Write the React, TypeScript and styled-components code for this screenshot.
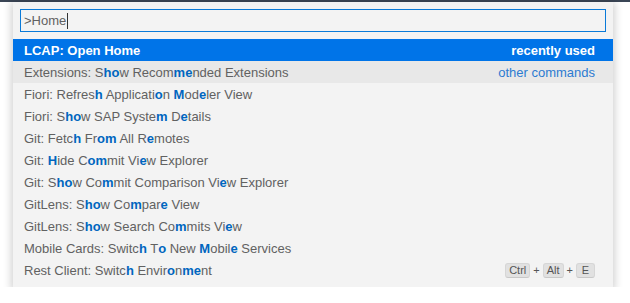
import {FC} from "react";
import styled, {createGlobalStyle} from "styled-components";

const GlobalStyle = createGlobalStyle`
  html, body {
    margin: 0;
    padding: 0;
    background: #ffffff;
  }

  body {
    font-family: "Liberation Sans", Arial, sans-serif;
    font-size: 13px;
  }
`

// [x] in a label marks a highlighted match
interface ICommand {
    label: string;
    detail?: string;
    keys?: string[];
}

const commands: ICommand[] = [
    {label: "Extensions: S[h][o]w Recom[m][e]nded Extensions", detail: "other commands"},
    {label: "Fiori: Refres[h] Applicati[o]n [M]od[e]ler View"},
    {label: "Fiori: S[h][o]w SAP Syste[m] D[e]tails"},
    {label: "Git: Fetc[h] Fr[o][m] All R[e]motes"},
    {label: "Git: [H]ide C[o][m]mit Vi[e]w Explorer"},
    {label: "Git: S[h][o]w Co[m]mit Comparison Vi[e]w Explorer"},
    {label: "GitLens: S[h][o]w Co[m]par[e] View"},
    {label: "GitLens: S[h][o]w Search Co[m]mits Vi[e]w"},
    {label: "Mobile Cards: Switc[h] T[o] New [M]obil[e] Services"},
    {label: "Rest Client: Switc[h] Envir[o]n[m][e]nt", keys: ["Ctrl", "Alt", "E"]},
]

const renderLabel = (label: string) => {
    const parts = label.split(/(\[.\])/).filter(Boolean)
    return parts.map((p, i) => p.startsWith("[")
        ? <Match key={i}>{p[1]}</Match>
        : <span key={i}>{p}</span>)
}

const Row: FC<{ cmd: ICommand; hover?: boolean }> = ({cmd, hover}) => (
    <Item hover={hover}>
        <Label>{renderLabel(cmd.label)}</Label>
        {cmd.detail && <Detail>{cmd.detail}</Detail>}
        {cmd.keys && (
            <Keys>
                {cmd.keys.map((k, i) => (
                    <span key={k}>
                        {i > 0 && <Plus>+</Plus>}
                        <Key>{k}</Key>
                    </span>
                ))}
            </Keys>
        )}
    </Item>
)

export default function App() {
    return (
        <>
            <GlobalStyle/>
            <TitleEdge/>
            <Palette>
                <InputWrap>
                    <Input>&gt;Home<Caret/></Input>
                </InputWrap>
                <List>
                    <Selected>
                        <span>LCAP: Open Home</span>
                        <span>recently used</span>
                    </Selected>
                    {commands.map((c, i) => <Row key={c.label} cmd={c} hover={i === 0}/>)}
                </List>
            </Palette>
        </>
    )
}

const TitleEdge = styled.div`
  height: 2px;
  background: #3b4656;
`

const Palette = styled.div`
  width: 600px;
  margin-left: 13px;
  background: #f3f3f3;
  box-shadow: 0 2px 8px 2px rgba(0, 0, 0, 0.18);
  padding-bottom: 6px;
`

const InputWrap = styled.div`
  padding: 7px;
`

const Input = styled.div`
  height: 21px;
  border: 1px solid #0a7ad8;
  background: #f3f3f3;
  color: #616161;
  font-size: 13px;
  line-height: 21px;
  padding-left: 3px;
  display: flex;
  align-items: center;
`

const Caret = styled.span`
  display: inline-block;
  width: 1px;
  height: 16px;
  background: #333333;
  margin-left: 1px;
`

const List = styled.div`
  display: flex;
  flex-direction: column;
`

const Item = styled.div<{ hover?: boolean }>`
  height: 22px;
  display: flex;
  align-items: center;
  justify-content: space-between;
  padding: 0 18px 0 11px;
  background: ${({hover}) => hover ? '#e8e8e8' : 'transparent'};
  color: #616161;
`

const Selected = styled(Item)`
  background: #0074e8;
  color: #ffffff;
  font-weight: 700;
`

const Label = styled.span`
  white-space: nowrap;
`

const Match = styled.span`
  color: #0066bf;
  font-weight: 700;
`

const Detail = styled.span`
  color: #2c7bd1;
`

const Keys = styled.span`
  display: flex;
  align-items: center;
  font-size: 11px;
  color: #555555;
`

const Key = styled.span`
  display: inline-block;
  min-width: 11px;
  text-align: center;
  background: #e1e1e1;
  border: 1px solid #d6d6d6;
  border-bottom-color: #c8c8c8;
  border-radius: 3px;
  padding: 0 3px;
  line-height: 13px;
`

const Plus = styled.span`
  margin: 0 3px;
`
